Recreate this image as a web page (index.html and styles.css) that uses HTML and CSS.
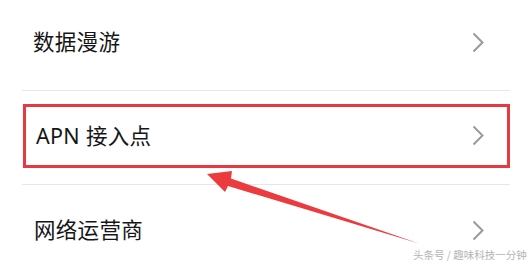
FILE: index.html
```html
<!DOCTYPE html>
<html lang="zh-CN">
<head>
<meta charset="utf-8">
<title>移动网络</title>
<link rel="stylesheet" href="styles.css">
</head>
<body>
<div class="screen">
  <div class="list">
    <div class="item item-first">
      <span class="label">数据漫游</span>
      <svg class="chev" width="12" height="21" viewBox="0 0 12 21"><path d="M1.5 1.5 L10.5 10.5 L1.5 19.5" fill="none" stroke="#9a9a9a" stroke-width="2"/></svg>
    </div>
    <div class="divider"></div>
    <div class="item item-highlight">
      <span class="label">APN 接入点</span>
      <svg class="chev" width="12" height="21" viewBox="0 0 12 21"><path d="M1.5 1.5 L10.5 10.5 L1.5 19.5" fill="none" stroke="#9a9a9a" stroke-width="2"/></svg>
    </div>
    <div class="divider divider-second"></div>
    <div class="item item-last">
      <span class="label">网络运营商</span>
      <svg class="chev" width="12" height="21" viewBox="0 0 12 21"><path d="M1.5 1.5 L10.5 10.5 L1.5 19.5" fill="none" stroke="#9a9a9a" stroke-width="2"/></svg>
    </div>
  </div>
  <svg class="arrow" width="530" height="264" viewBox="0 0 530 264">
    <polygon points="207,174 232,171 231,178.5 419,243.5 228,186 225,192" fill="#ec3b3f"/>
  </svg>
  <div class="watermark">头条号 / 趣味科技一分钟</div>
</div>
</body>
</html>
```
FILE: styles.css
```css
html, body {
  margin: 0;
  padding: 0;
  background: #ffffff;
}
.screen {
  position: relative;
  width: 530px;
  height: 264px;
  overflow: hidden;
  background: #ffffff;
  font-family: "Noto Sans", "Noto Sans CJK SC", sans-serif;
  color: #161616;
}
.list {
  margin-left: 22px;
  width: 488px;
  display: flex;
  flex-direction: column;
}
.item {
  display: flex;
  align-items: center;
  justify-content: space-between;
  box-sizing: border-box;
}
.label {
  font-size: 21.5px;
  line-height: 26px;
  letter-spacing: 0.3px;
}
.chev {
  display: block;
  flex: none;
}
.item-first {
  height: 84px;
  margin-bottom: 6px;
  padding-left: 11px;
  padding-right: 26px;
}
.divider {
  height: 1px;
  background: #e6e6e6;
}
.item-highlight {
  margin-top: 13px;
  height: 64px;
  border: 3px solid #e8393e;
  margin-left: 1px;
  padding-left: 10px;
  padding-right: 23px;
  padding-bottom: 1px;
}
.divider-second {
  margin-top: 16px;
}
.item-last {
  height: 90px;
  padding-left: 12px;
  padding-right: 26px;
}
.arrow {
  position: absolute;
  left: 0;
  top: 0;
}
.watermark {
  position: absolute;
  left: 413px;
  top: 248px;
  font-family: "Noto Sans CJK SC", sans-serif;
  font-size: 10.5px;
  line-height: 14px;
  color: #b4b4b4;
  white-space: nowrap;
}
```
